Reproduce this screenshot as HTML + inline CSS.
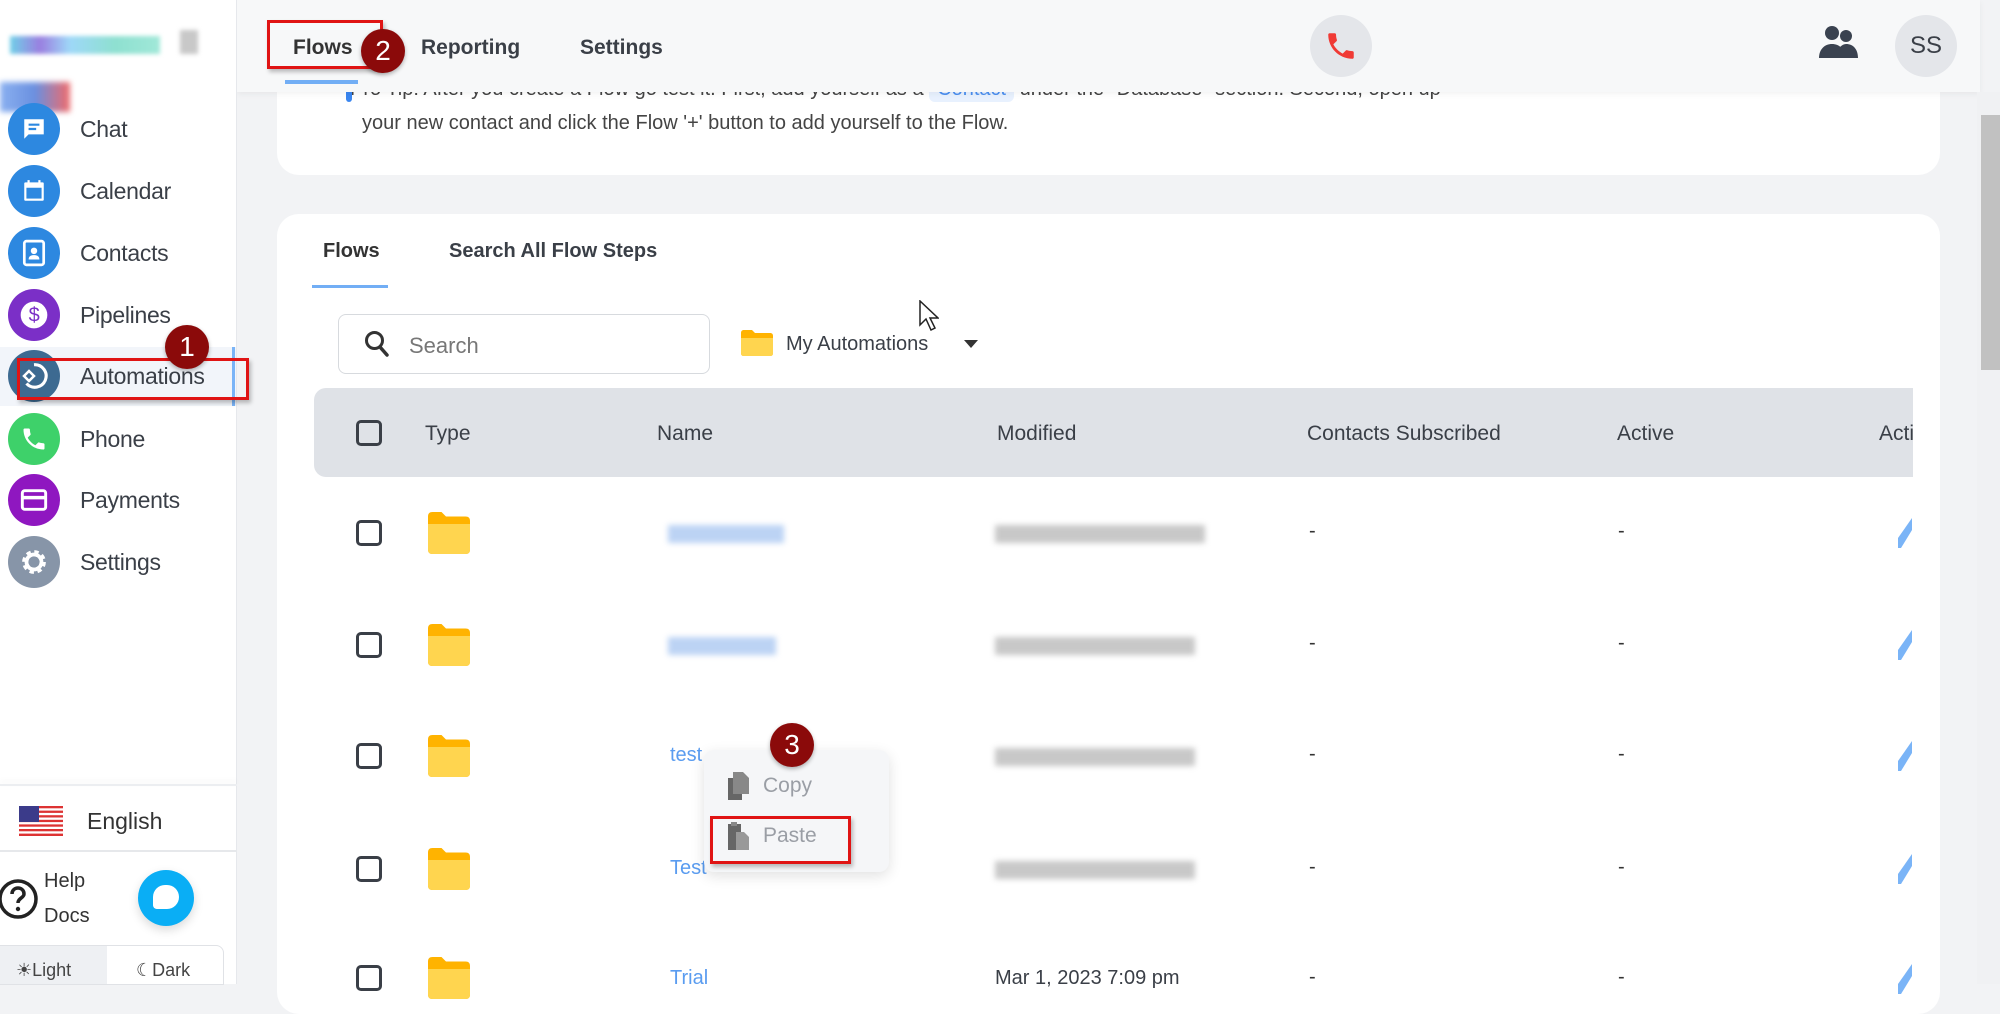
<!DOCTYPE html>
<html><head><meta charset="utf-8"><style>
*{box-sizing:border-box;margin:0;padding:0}
body{width:2000px;height:984px;overflow:hidden;background:#f2f3f5;font-family:"Liberation Sans",sans-serif;color:#333a44;position:relative}
.abs{position:absolute}
.sb{left:0;top:0;width:237px;height:984px;background:#fff;border-right:1px solid #e6e8ec}
.item{position:absolute;left:8px;height:52px;display:flex;align-items:center;font-size:23px;color:#3a3f47;letter-spacing:-0.3px}
.ic{width:52px;height:52px;border-radius:50%;margin-right:20px;display:flex;align-items:center;justify-content:center}
.badge{position:absolute;width:44px;height:44px;border-radius:50%;background:#8b0a0a;color:#fff;font-size:28px;display:flex;align-items:center;justify-content:center;box-shadow:0 2px 4px rgba(0,0,0,.3)}
.redbox{position:absolute;border:3px solid #e01414;box-shadow:2px 3px 4px rgba(0,0,0,.25)}
.card{background:#fff;border-radius:22px}
.th{position:absolute;top:422px;font-size:21px;color:#3a3f47}
.cb{position:absolute;left:356px;width:26px;height:26px;border:3px solid #3a3f47;border-radius:5px}
.blur{position:absolute;height:18px;filter:blur(3px)}
.dash{position:absolute;font-size:20px;color:#333}
.pen{position:absolute;left:1898px;width:14px;height:30px}
</style></head><body>

<!-- tip card -->
<div class="card abs" style="left:277px;top:40px;width:1663px;height:135px;border-radius:0 0 22px 22px"></div>
<div class="abs" style="left:350px;top:78px;font-size:20px;color:#444;white-space:nowrap">Pro Tip: After you create a Flow go test it. First, add yourself as a <span style="background:#e8f1fe;color:#4a8ef0;padding:2px 8px;border-radius:6px">Contact</span> under the "Database" section. Second, open up</div>
<div class="abs" style="left:362px;top:112px;font-size:20px;color:#444">your new contact and click the Flow '+' button to add yourself to the Flow.</div>
<div class="abs" style="left:346px;top:90px;width:6px;height:12px;background:#3a86f0;border-radius:0 0 3px 3px"></div>

<!-- top bar -->
<div class="abs" style="left:237px;top:0;width:1743px;height:92px;background:#f7f8f9;box-shadow:0 2px 6px rgba(0,0,0,.05)"></div>
<div class="abs" style="left:293px;top:36px;font-size:21px;font-weight:bold;color:#333">Flows</div>
<div class="abs" style="left:285px;top:80px;width:73px;height:4px;background:#72aef5"></div>
<div class="abs" style="left:421px;top:36px;font-size:21px;font-weight:bold;color:#3a3f47">Reporting</div>
<div class="abs" style="left:580px;top:36px;font-size:21px;font-weight:bold;color:#3a3f47">Settings</div>
<div class="redbox" style="left:267px;top:20px;width:116px;height:49px"></div>
<div class="badge" style="left:361px;top:29px">2</div>
<div class="abs" style="left:1310px;top:15px;width:62px;height:62px;border-radius:50%;background:#e4e6ea;display:flex;align-items:center;justify-content:center">
<svg width="34" height="38" viewBox="0 0 24 24"><path fill="#f03a35" d="M6.6 10.8c1.4 2.8 3.8 5.1 6.6 6.6l2.2-2.2c.3-.3.7-.4 1-.2 1.1.4 2.3.6 3.6.6.6 0 1 .4 1 1V20c0 .6-.4 1-1 1C10.6 21 3 13.4 3 4c0-.6.4-1 1-1h3.5c.6 0 1 .4 1 1 0 1.3.2 2.5.6 3.6.1.3 0 .7-.2 1z"/></svg></div>
<svg class="abs" style="left:1818px;top:24px" width="42" height="36" viewBox="0 0 42 36"><circle cx="14" cy="9" r="7" fill="#3a4250"/><circle cx="28" cy="12" r="6" fill="#3a4250"/><path d="M1 34c0-9 6-14 13-14s13 5 13 14z" fill="#3a4250"/><path d="M25 34c0-5-1-8-3-11 2-2 4-3 6-3 7 0 12 5 12 14z" fill="#3a4250"/></svg>
<div class="abs" style="left:1895px;top:15px;width:62px;height:62px;border-radius:50%;background:#e4e6ea;font-size:24px;color:#3a3f47;display:flex;align-items:center;justify-content:center">SS</div>

<!-- scrollbar -->
<div class="abs" style="left:1977px;top:92px;width:23px;height:892px;background:#f0f1f3"></div>
<div class="abs" style="left:1981px;top:115px;width:19px;height:255px;background:#c1c1c1"></div>

<!-- main card -->
<div class="card abs" style="left:277px;top:214px;width:1663px;height:800px"></div>
<div class="abs" style="left:323px;top:240px;font-size:20px;font-weight:bold;color:#333">Flows</div>
<div class="abs" style="left:312px;top:285px;width:76px;height:3px;background:#72aef5"></div>
<div class="abs" style="left:449px;top:240px;font-size:20px;font-weight:bold;color:#3a3f47">Search All Flow Steps</div>
<div class="abs" style="left:338px;top:314px;width:372px;height:60px;border:1px solid #d7dade;border-radius:8px"></div>
<svg class="abs" style="left:364px;top:330px" width="26" height="28" viewBox="0 0 26 28"><circle cx="10.5" cy="10.5" r="8" fill="none" stroke="#333" stroke-width="3"/><path d="M16 17l7 8" stroke="#333" stroke-width="3.5" stroke-linecap="round"/></svg>
<div class="abs" style="left:409px;top:333px;font-size:22px;color:#777">Search</div>
<svg class="abs" style="left:741px;top:330px" width="32" height="26" viewBox="0 0 32 26"><path d="M0 3c0-2 1-3 3-3h8l3 3h15c2 0 3 1 3 3v17c0 2-1 3-3 3H3c-2 0-3-1-3-3z" fill="#ffb300"/><path d="M0 8h32v15c0 2-1 3-3 3H3c-2 0-3-1-3-3z" fill="#ffd54f"/></svg>
<div class="abs" style="left:786px;top:333px;font-size:20px;color:#3a3f47">My Automations</div>
<svg class="abs" style="left:964px;top:340px" width="14" height="8"><path d="M0 0h14L7 8z" fill="#333"/></svg>
<svg class="abs" style="left:919px;top:300px" width="20" height="32" viewBox="0 0 20 32"><path d="M1 1v24l6-6 5 11 4-2-5-10h8z" fill="#fff" stroke="#222" stroke-width="1.5"/></svg>

<!-- table header -->
<div class="abs" style="left:314px;top:388px;width:1599px;height:89px;background:#dfe2e7;border-radius:12px 0 0 12px"></div>
<div class="cb" style="top:420px"></div>
<div class="th" style="left:425px">Type</div>
<div class="th" style="left:657px">Name</div>
<div class="th" style="left:997px">Modified</div>
<div class="th" style="left:1307px">Contacts Subscribed</div>
<div class="th" style="left:1617px">Active</div>
<div class="th" style="left:1879px;width:34px;overflow:hidden">Actions</div>

<!-- row 1 -->
<div class="cb" style="top:520px"></div><svg class="abs" style="left:425px;top:512px" width="48" height="42" viewBox="0 0 32 28"><path d="M2 3c0-2 1-3 3-3h6l3 3h13c2 0 3 1 3 3v19c0 2-1 3-3 3H5c-2 0-3-1-3-3z" fill="#ffb300"/><path d="M2 8h28v17c0 2-1 3-3 3H5c-2 0-3-1-3-3z" fill="#ffd54f"/></svg>
<div class="blur" style="left:668px;top:525px;width:116px;background:#bcd3f4"></div>
<div class="blur" style="left:995px;top:525px;width:210px;background:#c8c8c8"></div>
<div class="dash" style="left:1309px;top:520px">-</div><div class="dash" style="left:1618px;top:520px">-</div>
<svg class="pen" style="top:518px" viewBox="0 0 14 30"><path d="M14 0L0 20v10h3L14 12z" fill="#7ab4f7"/></svg>
<!-- row 2 -->
<div class="cb" style="top:632px"></div><svg class="abs" style="left:425px;top:624px" width="48" height="42" viewBox="0 0 32 28"><path d="M2 3c0-2 1-3 3-3h6l3 3h13c2 0 3 1 3 3v19c0 2-1 3-3 3H5c-2 0-3-1-3-3z" fill="#ffb300"/><path d="M2 8h28v17c0 2-1 3-3 3H5c-2 0-3-1-3-3z" fill="#ffd54f"/></svg>
<div class="blur" style="left:668px;top:637px;width:108px;background:#bcd3f4"></div>
<div class="blur" style="left:995px;top:637px;width:200px;background:#c8c8c8"></div>
<div class="dash" style="left:1309px;top:632px">-</div><div class="dash" style="left:1618px;top:632px">-</div>
<svg class="pen" style="top:630px" viewBox="0 0 14 30"><path d="M14 0L0 20v10h3L14 12z" fill="#7ab4f7"/></svg>
<!-- row 3 -->
<div class="cb" style="top:743px"></div><svg class="abs" style="left:425px;top:735px" width="48" height="42" viewBox="0 0 32 28"><path d="M2 3c0-2 1-3 3-3h6l3 3h13c2 0 3 1 3 3v19c0 2-1 3-3 3H5c-2 0-3-1-3-3z" fill="#ffb300"/><path d="M2 8h28v17c0 2-1 3-3 3H5c-2 0-3-1-3-3z" fill="#ffd54f"/></svg>
<div class="abs" style="left:670px;top:744px;font-size:20px;color:#5a9cf0">test</div>
<div class="blur" style="left:995px;top:748px;width:200px;background:#c8c8c8"></div>
<div class="dash" style="left:1309px;top:743px">-</div><div class="dash" style="left:1618px;top:743px">-</div>
<svg class="pen" style="top:741px" viewBox="0 0 14 30"><path d="M14 0L0 20v10h3L14 12z" fill="#7ab4f7"/></svg>
<!-- row 4 -->
<div class="cb" style="top:856px"></div><svg class="abs" style="left:425px;top:848px" width="48" height="42" viewBox="0 0 32 28"><path d="M2 3c0-2 1-3 3-3h6l3 3h13c2 0 3 1 3 3v19c0 2-1 3-3 3H5c-2 0-3-1-3-3z" fill="#ffb300"/><path d="M2 8h28v17c0 2-1 3-3 3H5c-2 0-3-1-3-3z" fill="#ffd54f"/></svg>
<div class="abs" style="left:670px;top:857px;font-size:20px;color:#5a9cf0">Test</div>
<div class="blur" style="left:995px;top:861px;width:200px;background:#c8c8c8"></div>
<div class="dash" style="left:1309px;top:856px">-</div><div class="dash" style="left:1618px;top:856px">-</div>
<svg class="pen" style="top:854px" viewBox="0 0 14 30"><path d="M14 0L0 20v10h3L14 12z" fill="#7ab4f7"/></svg>
<!-- row 5 -->
<div class="cb" style="top:965px"></div><svg class="abs" style="left:425px;top:957px" width="48" height="42" viewBox="0 0 32 28"><path d="M2 3c0-2 1-3 3-3h6l3 3h13c2 0 3 1 3 3v19c0 2-1 3-3 3H5c-2 0-3-1-3-3z" fill="#ffb300"/><path d="M2 8h28v17c0 2-1 3-3 3H5c-2 0-3-1-3-3z" fill="#ffd54f"/></svg>
<div class="abs" style="left:670px;top:967px;font-size:20px;color:#5a9cf0">Trial</div>
<div class="abs" style="left:995px;top:967px;font-size:20px;color:#3a3f47">Mar 1, 2023 7:09 pm</div>
<div class="dash" style="left:1309px;top:966px">-</div><div class="dash" style="left:1618px;top:966px">-</div>
<svg class="pen" style="top:964px" viewBox="0 0 14 30"><path d="M14 0L0 20v10h3L14 12z" fill="#7ab4f7"/></svg>

<!-- context menu -->
<div class="abs" style="left:704px;top:750px;width:185px;height:122px;background:#f5f6f8;border-radius:10px;box-shadow:0 4px 14px rgba(0,0,0,.12)"></div>
<svg class="abs" style="left:728px;top:772px" width="22" height="28" viewBox="0 0 22 28"><rect x="0" y="6" width="14" height="22" fill="#666"/><path d="M5 0h10l6 6v16H5z" fill="#888"/></svg>
<div class="abs" style="left:763px;top:774px;font-size:21px;color:#9a9ea5">Copy</div>
<svg class="abs" style="left:728px;top:822px" width="22" height="28" viewBox="0 0 22 28"><rect x="0" y="2" width="13" height="26" fill="#666"/><rect x="3" y="0" width="6" height="4" fill="#888"/><path d="M8 10h8l5 5v13H8z" fill="#999"/></svg>
<div class="abs" style="left:763px;top:824px;font-size:21px;color:#9a9ea5">Paste</div>
<div class="redbox" style="left:710px;top:816px;width:141px;height:48px"></div>
<div class="badge" style="left:770px;top:723px">3</div>

<!-- sidebar -->
<div class="sb abs"></div>
<div class="abs" style="left:10px;top:36px;width:150px;height:18px;filter:blur(2px);background:linear-gradient(90deg,#70d0e8,#9a7fe0 20%,#9ed8f8 40%,#8ee0d0 70%,#a0e8d8)"></div>
<div class="abs" style="left:180px;top:30px;width:18px;height:24px;background:#c8c8c8;filter:blur(2px)"></div>
<div class="abs" style="left:0;top:82px;width:70px;height:30px;filter:blur(3px);background:linear-gradient(90deg,#8ab0f0,#6a90e0 50%,#f06a6a)"></div>
<div class="abs" style="left:0;top:347px;width:236px;height:59px;background:#f2f5fa"></div>
<div class="abs" style="left:232px;top:347px;width:3px;height:59px;background:#7ab4f7"></div>

<div class="item" style="top:103px"><div class="ic" style="background:#2d88e0"><svg width="26" height="26" viewBox="0 0 24 24"><path d="M3 3h18v14H7l-4 4z" fill="#fff"/><path d="M7 8h10M7 12h7" stroke="#2d88e0" stroke-width="2"/></svg></div>Chat</div>
<div class="item" style="top:165px"><div class="ic" style="background:#2d88e0"><svg width="26" height="26" viewBox="0 0 24 24"><rect x="3" y="4" width="18" height="17" rx="1" fill="#fff"/><rect x="5" y="9" width="14" height="10" fill="#2d88e0"/><path d="M7 2v4M17 2v4" stroke="#fff" stroke-width="2"/></svg></div>Calendar</div>
<div class="item" style="top:227px"><div class="ic" style="background:#2d88e0"><svg width="26" height="28" viewBox="0 0 24 26"><rect x="3" y="2" width="18" height="22" rx="2" fill="none" stroke="#fff" stroke-width="2.5"/><circle cx="12" cy="11" r="3" fill="#fff"/><path d="M7 19c0-3 2-4 5-4s5 1 5 4z" fill="#fff"/></svg></div>Contacts</div>
<div class="item" style="top:289px"><div class="ic" style="background:#7b2fc7"><svg width="32" height="32" viewBox="0 0 24 24"><circle cx="12" cy="12" r="10" fill="#fff"/><text x="12" y="17" font-size="15" text-anchor="middle" fill="#7b2fc7" font-family="Liberation Sans">$</text></svg></div>Pipelines</div>
<div class="item" style="top:350px"><div class="ic" style="background:#3d6a91"><svg width="30" height="30" viewBox="0 0 24 24"><path d="M12 3a9 9 0 1 1-6 15" fill="none" stroke="#fff" stroke-width="2.5"/><path d="M4 12l4-4 4 4-4 4z" fill="none" stroke="#fff" stroke-width="2"/></svg></div>Automations</div>
<div class="item" style="top:413px"><div class="ic" style="background:#3ed16a"><svg width="28" height="28" viewBox="0 0 24 24"><path fill="#fff" d="M6.6 10.8c1.4 2.8 3.8 5.1 6.6 6.6l2.2-2.2c.3-.3.7-.4 1-.2 1.1.4 2.3.6 3.6.6.6 0 1 .4 1 1V20c0 .6-.4 1-1 1C10.6 21 3 13.4 3 4c0-.6.4-1 1-1h3.5c.6 0 1 .4 1 1 0 1.3.2 2.5.6 3.6.1.3 0 .7-.2 1z"/></svg></div>Phone</div>
<div class="item" style="top:474px"><div class="ic" style="background:#8f17c0"><svg width="28" height="24" viewBox="0 0 24 20"><rect x="2" y="2" width="20" height="16" rx="2" fill="none" stroke="#fff" stroke-width="2.5"/><path d="M2 8h20" stroke="#fff" stroke-width="3"/></svg></div>Payments</div>
<div class="item" style="top:536px"><div class="ic" style="background:#8795a8"><svg width="30" height="30" viewBox="0 0 24 24"><circle cx="12" cy="12" r="7" fill="none" stroke="#fff" stroke-width="5" stroke-dasharray="3 2.5"/><circle cx="12" cy="12" r="6" fill="none" stroke="#fff" stroke-width="3"/></svg></div>Settings</div>

<div class="redbox" style="left:17px;top:358px;width:232px;height:42px"></div>
<div class="badge" style="left:165px;top:325px">1</div>

<div class="abs" style="left:0;top:784px;width:237px;height:2px;background:#eceef1;box-shadow:0 -3px 6px rgba(0,0,0,.06)"></div>
<svg class="abs" style="left:19px;top:806px" width="44" height="30" viewBox="0 0 44 30"><rect width="44" height="30" fill="#fff"/><g fill="#d33">
<rect y="0" width="44" height="2.3"/><rect y="4.6" width="44" height="2.3"/><rect y="9.2" width="44" height="2.3"/><rect y="13.8" width="44" height="2.3"/><rect y="18.4" width="44" height="2.3"/><rect y="23" width="44" height="2.3"/><rect y="27.6" width="44" height="2.4"/></g><rect width="20" height="16" fill="#3b3b8a"/></svg>
<div class="abs" style="left:87px;top:808px;font-size:23px;color:#333">English</div>
<div class="abs" style="left:0;top:850px;width:237px;height:2px;background:#e6e8eb"></div>
<svg class="abs" style="left:0;top:875px" width="40" height="48" viewBox="0 0 40 48"><circle cx="18" cy="24" r="18" fill="none" stroke="#222" stroke-width="3.5"/><path d="M12 19c0-4 3-6 6-6s6 2 6 6c0 4-6 4-6 9" fill="none" stroke="#222" stroke-width="3.5"/><circle cx="18" cy="34" r="2.2" fill="#222"/></svg>
<div class="abs" style="left:44px;top:870px;font-size:20px;color:#333">Help</div>
<div class="abs" style="left:44px;top:905px;font-size:20px;color:#333">Docs</div>
<div class="abs" style="left:138px;top:870px;width:56px;height:56px;border-radius:50%;background:#0aaef5;box-shadow:0 4px 10px rgba(0,0,0,.15)"><div style="position:absolute;left:15px;top:15px;width:26px;height:24px;background:#fff;border-radius:13px 13px 13px 4px"></div></div>
<div class="abs" style="left:0;top:945px;width:224px;height:40px;border:1px solid #e0e2e6;border-radius:0 8px 0 0"></div>
<div class="abs" style="left:0;top:946px;width:107px;height:38px;background:#eef0f3"></div>
<div class="abs" style="left:16px;top:960px;font-size:18px;color:#444">☀Light</div>
<div class="abs" style="left:136px;top:960px;font-size:18px;color:#444">☾Dark</div>
</body></html>
